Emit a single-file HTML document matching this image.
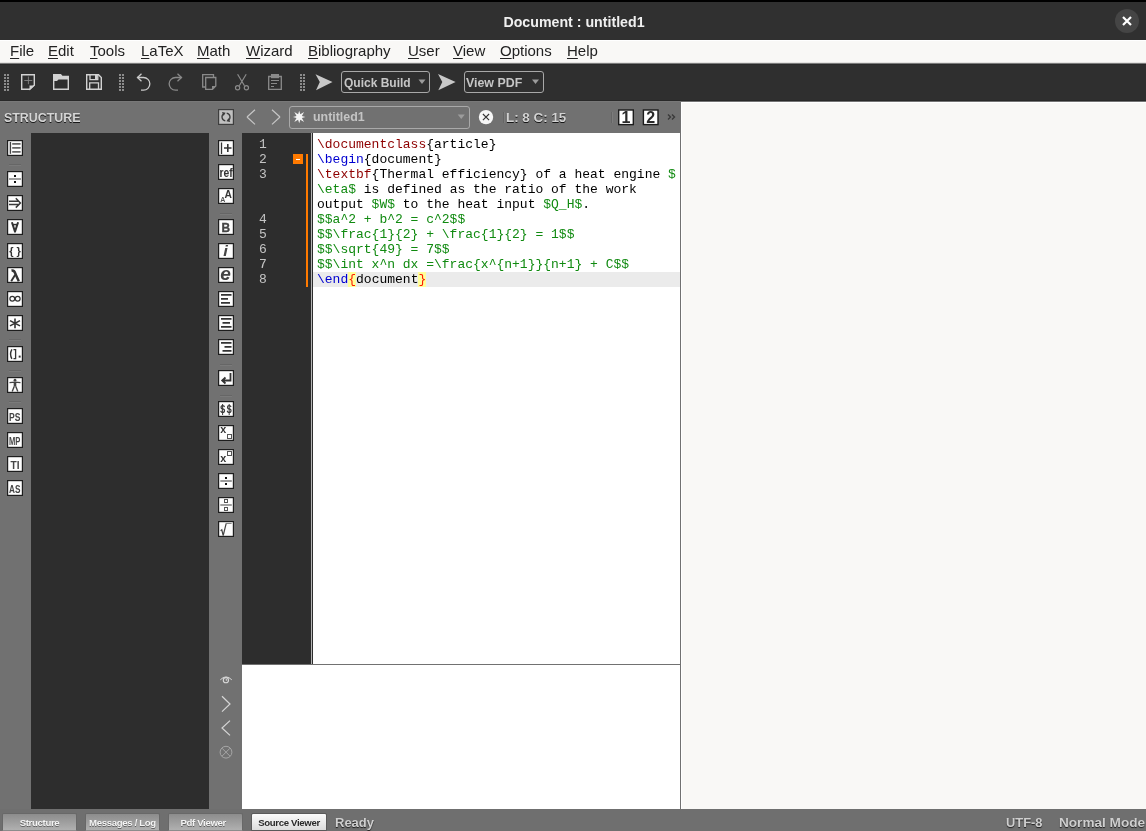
<!DOCTYPE html><html><head><meta charset="utf-8"><style>
*{margin:0;padding:0;box-sizing:border-box}
html,body{width:1146px;height:831px;overflow:hidden;background:#f9f8f6;font-family:"Liberation Sans",sans-serif}
.a{will-change:transform}
.a{position:absolute}
.mi{top:42px;font-size:15px;line-height:17px;color:#222}
.mi u{text-decoration:underline;text-underline-offset:1.5px;text-decoration-thickness:1px}
.hd{font-weight:bold;color:#d6d6d6;text-shadow:0 1px 0 #181818;white-space:nowrap}
.code{font-family:"Liberation Mono",monospace;font-size:13px;line-height:15px;white-space:pre;color:#000;left:317px}
.ln{font-family:"Liberation Mono",monospace;font-size:13px;line-height:15px;color:#c4c4c4;left:259px}
.r{color:#8e0000}.b{color:#0000d0}.g{color:#108a10}
.hl{background:#ffff99;color:#ff1a00}
.btn{top:813px;height:18px;border:1px solid #686868;border-bottom:1px solid #8c8c8c;border-radius:2px 2px 0 0;background:linear-gradient(#8c8c8c,#b0b0b0);color:#f4f4f4;font-weight:bold;font-size:9.6px;letter-spacing:-0.33px;line-height:17px;text-align:center;text-shadow:0 1px 0 #606060;white-space:nowrap}
svg{position:absolute;left:0;top:0}
</style></head><body>
<div class="a" style="left:0px;top:0px;width:1146px;height:2px;background:#000;"></div>
<div class="a" style="left:0px;top:2px;width:1146px;height:38px;background:#303030;"></div>
<div class="a" style="left:0;top:14px;width:1148px;text-align:center;color:#f0f0f0;font-weight:bold;font-size:14.2px;line-height:16px">Document : untitled1</div>
<div class="a" style="left:1115px;top:9px;width:24px;height:24px;background:#454545;border-radius:12px"></div>
<div class="a" style="left:0px;top:40px;width:1146px;height:23px;background:#f9f8f6;border-top:1px solid #ffffff"></div>
<div class="a mi" style="left:10px"><u>F</u>ile</div>
<div class="a mi" style="left:48px"><u>E</u>dit</div>
<div class="a mi" style="left:90px"><u>T</u>ools</div>
<div class="a mi" style="left:141px"><u>L</u>aTeX</div>
<div class="a mi" style="left:197px"><u>M</u>ath</div>
<div class="a mi" style="left:246px"><u>W</u>izard</div>
<div class="a mi" style="left:308px"><u>B</u>ibliography</div>
<div class="a mi" style="left:408px"><u>U</u>ser</div>
<div class="a mi" style="left:453px"><u>V</u>iew</div>
<div class="a mi" style="left:500px"><u>O</u>ptions</div>
<div class="a mi" style="left:567px"><u>H</u>elp</div>
<div class="a" style="left:0px;top:63px;width:1146px;height:38px;background:#2f2f2f;"></div>
<div class="a" style="left:0px;top:62px;width:1146px;height:1px;background:#e4e3e1;"></div>
<div class="a" style="left:0px;top:63px;width:1146px;height:1px;background:#7a7a7a;"></div>
<div class="a" style="left:0px;top:64px;width:1146px;height:1px;background:#2a2a2a;"></div>
<div class="a" style="left:341px;top:71px;width:89px;height:22px;background:transparent;border:1px solid #a8a8a8;border-radius:3px"></div>
<div class="a" style="left:464px;top:71px;width:80px;height:22px;background:transparent;border:1px solid #a8a8a8;border-radius:3px"></div>
<div class="a" style="left:343.5px;top:76px;font-weight:bold;font-size:12px;line-height:14px;color:#c6c6c6">Quick Build</div>
<div class="a" style="left:466.3px;top:76px;font-weight:bold;font-size:12.4px;line-height:14px;color:#c6c6c6">View PDF</div>
<div class="a" style="left:0px;top:101px;width:681px;height:708px;background:#717171;"></div>
<div class="a" style="left:0px;top:100px;width:1146px;height:1px;background:#282828;"></div>
<div class="a" style="left:0px;top:101px;width:681px;height:1px;background:#787878;"></div>
<div class="a" style="left:681px;top:101px;width:465px;height:1px;background:#747474;"></div>
<div class="a" style="left:681px;top:102px;width:465px;height:1px;background:#ffffff;"></div>
<div class="a" style="left:681px;top:102px;width:1px;height:707px;background:#ffffff;"></div>
<div class="a" style="left:31px;top:133px;width:178px;height:676px;background:#2d2d2d;"></div>
<div class="a hd" style="left:4px;top:111px;font-size:12.4px;line-height:14px">STRUCTURE</div>
<div class="a" style="left:289px;top:106px;width:181px;height:23px;background:transparent;border:1px solid #a9a9a9;border-radius:3px"></div>
<div class="a hd" style="left:313px;top:110px;font-size:12.4px;line-height:14px;color:#c4c4c4;text-shadow:none">untitled1</div>
<div class="a hd" style="left:505.5px;top:111px;font-size:13.4px;line-height:14px;color:#d2d2d2;text-shadow:0 1px 0 #151515">L: 8 C: 15</div>
<div class="a" style="left:503px;top:112px;width:1px;height:11px;background:#656565;"></div>
<div class="a" style="left:504px;top:112px;width:1px;height:11px;background:#7c7c7c;"></div>
<div class="a" style="left:611px;top:112px;width:1px;height:11px;background:#656565;"></div>
<div class="a" style="left:612px;top:112px;width:1px;height:11px;background:#7c7c7c;"></div>
<div class="a" style="left:242px;top:133px;width:69px;height:531px;background:#2d2d2d;"></div>
<div class="a" style="left:311px;top:133px;width:1px;height:531px;background:#b4b4b4;"></div>
<div class="a" style="left:312px;top:133px;width:1px;height:531px;background:#2d2d2d;"></div>
<div class="a" style="left:313px;top:133px;width:367px;height:531px;background:#ffffff;"></div>
<div class="a" style="left:313px;top:272px;width:367px;height:15px;background:#ebebeb;"></div>
<div class="a" style="left:293px;top:154px;width:10px;height:10px;background:#ff7a00;"></div>
<div class="a" style="left:296px;top:159px;width:4px;height:1px;background:#ffffff;"></div>
<div class="a" style="left:306px;top:154px;width:2px;height:133px;background:#ff7a00;"></div>
<div class="a ln" style="top:137px">1</div>
<div class="a ln" style="top:152px">2</div>
<div class="a ln" style="top:167px">3</div>
<div class="a ln" style="top:212px">4</div>
<div class="a ln" style="top:227px">5</div>
<div class="a ln" style="top:242px">6</div>
<div class="a ln" style="top:257px">7</div>
<div class="a ln" style="top:272px">8</div>
<div class="a code" style="top:137px"><span class="r">\documentclass</span>{article}</div>
<div class="a code" style="top:152px"><span class="b">\begin</span>{document}</div>
<div class="a code" style="top:167px"><span class="r">\textbf</span>{Thermal efficiency} of a heat engine <span class="g">$</span></div>
<div class="a code" style="top:182px"><span class="g">\eta$</span> is defined as the ratio of the work</div>
<div class="a code" style="top:197px">output <span class="g">$W$</span> to the heat input <span class="g">$Q_H$</span>.</div>
<div class="a code" style="top:212px"><span class="g">$$a^2 + b^2 = c^2$$</span></div>
<div class="a code" style="top:227px"><span class="g">$$\frac{1}{2} + \frac{1}{2} = 1$$</span></div>
<div class="a code" style="top:242px"><span class="g">$$\sqrt{49} = 7$$</span></div>
<div class="a code" style="top:257px"><span class="g">$$\int x^n dx =\frac{x^{n+1}}{n+1} + C$$</span></div>
<div class="a code" style="top:272px"><span class="b">\end</span><span class="hl">{</span>document<span class="hl">}</span></div>
<div class="a" style="left:242px;top:664px;width:438px;height:1px;background:#717171;"></div>
<div class="a" style="left:242px;top:665px;width:438px;height:144px;background:#ffffff;"></div>
<div class="a" style="left:0px;top:809px;width:1146px;height:22px;background:#6f6f6f;"></div>
<div class="a btn" style="left:2px;width:75px">Structure</div>
<div class="a btn" style="left:85px;width:75px">Messages / Log</div>
<div class="a btn" style="left:168px;width:75px">Pdf Viewer&nbsp;&nbsp;</div>
<div class="a btn" style="left:251px;width:76px;background:linear-gradient(#fbfbfb,#dcdcdc);color:#2a2a2a;text-shadow:none;border-color:#5a5a5a">Source Viewer</div>
<div class="a hd" style="left:335px;top:815px;font-size:13px;line-height:15px;color:#cfcfcf;text-shadow:0 1px 1px #1a1a1a">Ready</div>
<div class="a hd" style="left:1005.5px;top:814.5px;font-size:12.9px;line-height:15px;color:#cfcfcf;text-shadow:0 1px 1px #1e1e1e">UTF-8</div>
<div class="a hd" style="left:1058.5px;top:814.5px;font-size:13.6px;line-height:15px;color:#cfcfcf;text-shadow:0 1px 1px #1e1e1e">Normal Mode</div>
<svg width="1146" height="831" viewBox="0 0 1146 831"><path d="M1123 17L1131 25M1131 17L1123 25" stroke="#fff" stroke-width="2.2"/><rect x="4" y="74" width="2" height="2" fill="#8c8c8c"/><rect x="7" y="74" width="2" height="2" fill="#8c8c8c"/><rect x="4" y="77" width="2" height="2" fill="#8c8c8c"/><rect x="7" y="77" width="2" height="2" fill="#8c8c8c"/><rect x="4" y="80" width="2" height="2" fill="#8c8c8c"/><rect x="7" y="80" width="2" height="2" fill="#8c8c8c"/><rect x="4" y="83" width="2" height="2" fill="#8c8c8c"/><rect x="7" y="83" width="2" height="2" fill="#8c8c8c"/><rect x="4" y="86" width="2" height="2" fill="#8c8c8c"/><rect x="7" y="86" width="2" height="2" fill="#8c8c8c"/><rect x="4" y="89" width="2" height="2" fill="#8c8c8c"/><rect x="7" y="89" width="2" height="2" fill="#8c8c8c"/><rect x="119" y="74" width="2" height="2" fill="#8c8c8c"/><rect x="122" y="74" width="2" height="2" fill="#8c8c8c"/><rect x="119" y="77" width="2" height="2" fill="#8c8c8c"/><rect x="122" y="77" width="2" height="2" fill="#8c8c8c"/><rect x="119" y="80" width="2" height="2" fill="#8c8c8c"/><rect x="122" y="80" width="2" height="2" fill="#8c8c8c"/><rect x="119" y="83" width="2" height="2" fill="#8c8c8c"/><rect x="122" y="83" width="2" height="2" fill="#8c8c8c"/><rect x="119" y="86" width="2" height="2" fill="#8c8c8c"/><rect x="122" y="86" width="2" height="2" fill="#8c8c8c"/><rect x="119" y="89" width="2" height="2" fill="#8c8c8c"/><rect x="122" y="89" width="2" height="2" fill="#8c8c8c"/><rect x="300" y="74" width="2" height="2" fill="#8c8c8c"/><rect x="303" y="74" width="2" height="2" fill="#8c8c8c"/><rect x="300" y="77" width="2" height="2" fill="#8c8c8c"/><rect x="303" y="77" width="2" height="2" fill="#8c8c8c"/><rect x="300" y="80" width="2" height="2" fill="#8c8c8c"/><rect x="303" y="80" width="2" height="2" fill="#8c8c8c"/><rect x="300" y="83" width="2" height="2" fill="#8c8c8c"/><rect x="303" y="83" width="2" height="2" fill="#8c8c8c"/><rect x="300" y="86" width="2" height="2" fill="#8c8c8c"/><rect x="303" y="86" width="2" height="2" fill="#8c8c8c"/><rect x="300" y="89" width="2" height="2" fill="#8c8c8c"/><rect x="303" y="89" width="2" height="2" fill="#8c8c8c"/><path d="M21.7 74.7H34.3V85.3L29.6 89.3H21.7Z" fill="none" stroke="#d2d2d2" stroke-width="1.4"/><path d="M29.5 85.5H34.5L29.5 90.5Z" fill="#d2d2d2"/><path d="M24.3 80.5H32.3M28.4 76.5V84.2" stroke="#858585" stroke-width="0.9"/><path d="M53.7 89.3V74.7H60.5L62 76.5H68.3V89.3Z" fill="none" stroke="#d2d2d2" stroke-width="1.4"/><path d="M53 74H60.7L62.3 76H69V79.5H58.5L57 81H53Z" fill="#d2d2d2"/><path d="M86.7 74.7H98.5L101.3 77.5V89.3H86.7Z" fill="none" stroke="#d2d2d2" stroke-width="1.4"/><path d="M90 74V79.7H97.8V74" fill="none" stroke="#d2d2d2" stroke-width="1.3"/><rect x="95" y="75" width="2.5" height="4" fill="#d2d2d2"/><path d="M89.7 90V82.8H98.5V90" fill="none" stroke="#d2d2d2" stroke-width="1.3"/><path d="M137.5 77.5H143.5A6.3 6.3 0 0 1 143.5 90.2H141" fill="none" stroke="#cacaca" stroke-width="1.3"/><path d="M141.5 73.8L137.5 77.5L141.5 81.2" fill="none" stroke="#cacaca" stroke-width="1.3"/><path d="M181.5 77.5H175.5A6.3 6.3 0 0 0 175.5 90.2H178" fill="none" stroke="#8a8a8a" stroke-width="1.3"/><path d="M177.5 73.8L181.5 77.5L177.5 81.2" fill="none" stroke="#8a8a8a" stroke-width="1.3"/><path d="M205.5 87H202.7V74.7H213.5V77.2" fill="none" stroke="#8a8a8a" stroke-width="1.3"/><path d="M205.7 77.5H215.8V86L212.5 89.3H205.7Z" fill="none" stroke="#8a8a8a" stroke-width="1.3"/><path d="M212 86H216L212 90Z" fill="#8a8a8a"/><path d="M237.6 74.3L244.5 85.8M246.2 74.3L239.3 85.8" fill="none" stroke="#8a8a8a" stroke-width="1.2"/><circle cx="237.6" cy="87.8" r="2.1" fill="none" stroke="#8a8a8a" stroke-width="1.2"/><circle cx="246.4" cy="87.8" r="2.1" fill="none" stroke="#8a8a8a" stroke-width="1.2"/><path d="M268.7 76.5H281.3V89.4H268.7Z" fill="none" stroke="#8a8a8a" stroke-width="1.3"/><rect x="271" y="74" width="8" height="4.2" fill="#8a8a8a"/><path d="M271 80.5H279M271 83.5H277M271 86.5H274" stroke="#8a8a8a" stroke-width="1"/><path d="M315.5 74.3L332.5 82L316 90.2L319.8 82Z" fill="#c8c8c8"/><path d="M438 74L455.6 82L438.3 90.2L442.3 82Z" fill="#c8c8c8"/><path d="M418.5 79.5H425.5L422 84Z" fill="#9c9c9c"/><path d="M532 79.5H539L535.5 84Z" fill="#9c9c9c"/><rect x="218.6" y="109.6" width="14.8" height="14.8" fill="#c0c0c0" stroke="#3e3e3e" stroke-width="1.2"/><path d="M224 113.5A4 4 0 0 0 225.3 120.9M226.7 113.1A4 4 0 0 1 228 120.5" fill="none" stroke="#3a3a3a" stroke-width="1.3"/><path d="M222 112L225.6 112.8L223.6 116Z M230.2 122L226.5 121.2L228.6 118Z" fill="#3a3a3a"/><path d="M247 117L255 109.8M247 117L255 124.4" fill="none" stroke="#c6c6c6" stroke-width="1.2"/><path d="M280 117L272 109.8M280 117L272 124.4" fill="none" stroke="#c6c6c6" stroke-width="1.2"/><polygon points="299.20,110.80 300.31,114.32 304.08,112.12 301.88,115.89 305.40,117.00 301.88,118.11 304.08,121.88 300.31,119.68 299.20,123.20 298.09,119.68 294.32,121.88 296.52,118.11 293.00,117.00 296.52,115.89 294.32,112.12 298.09,114.32" fill="#f4f4f4"/><path d="M457.7 114.6H464.8L461.25 118.9Z" fill="#9c9c9c"/><circle cx="486" cy="117.1" r="7.2" fill="#f6f6f6"/><path d="M482.9 114L489.1 120.2M489.1 114L482.9 120.2" stroke="#333" stroke-width="1.1"/><rect x="618.7" y="110" width="14.6" height="14.6" fill="#fff" stroke="#1c1c1c" stroke-width="1.4"/><rect x="643.4" y="110" width="14.6" height="14.6" fill="#fff" stroke="#1c1c1c" stroke-width="1.4"/><text x="626" y="123" font-family="Liberation Sans" font-weight="bold" font-size="16" text-anchor="middle" fill="#2a2a2a">1</text><text x="650.7" y="123" font-family="Liberation Sans" font-weight="bold" font-size="16" text-anchor="middle" fill="#2a2a2a">2</text><path d="M668 114.5L670.5 117L668 119.5M672 114.5L674.5 117L672 119.5" fill="none" stroke="#3a3a3a" stroke-width="1.4"/><rect x="7.6" y="140.6" width="14.8" height="14.8" fill="#fdfdfd" stroke="#1e1e1e" stroke-width="1.2"/><rect x="7.6" y="171.6" width="14.8" height="14.8" fill="#fdfdfd" stroke="#1e1e1e" stroke-width="1.2"/><rect x="7.6" y="195.6" width="14.8" height="14.8" fill="#fdfdfd" stroke="#1e1e1e" stroke-width="1.2"/><rect x="7.6" y="219.6" width="14.8" height="14.8" fill="#fdfdfd" stroke="#1e1e1e" stroke-width="1.2"/><rect x="7.6" y="243.6" width="14.8" height="14.8" fill="#fdfdfd" stroke="#1e1e1e" stroke-width="1.2"/><rect x="7.6" y="267.6" width="14.8" height="14.8" fill="#fdfdfd" stroke="#1e1e1e" stroke-width="1.2"/><rect x="7.6" y="291.6" width="14.8" height="14.8" fill="#fdfdfd" stroke="#1e1e1e" stroke-width="1.2"/><rect x="7.6" y="315.6" width="14.8" height="14.8" fill="#fdfdfd" stroke="#1e1e1e" stroke-width="1.2"/><rect x="7.6" y="346.6" width="14.8" height="14.8" fill="#fdfdfd" stroke="#1e1e1e" stroke-width="1.2"/><rect x="7.6" y="377.6" width="14.8" height="14.8" fill="#fdfdfd" stroke="#1e1e1e" stroke-width="1.2"/><rect x="7.6" y="408.6" width="14.8" height="14.8" fill="#fdfdfd" stroke="#1e1e1e" stroke-width="1.2"/><rect x="7.6" y="432.6" width="14.8" height="14.8" fill="#fdfdfd" stroke="#1e1e1e" stroke-width="1.2"/><rect x="7.6" y="456.6" width="14.8" height="14.8" fill="#fdfdfd" stroke="#1e1e1e" stroke-width="1.2"/><rect x="7.6" y="480.6" width="14.8" height="14.8" fill="#fdfdfd" stroke="#1e1e1e" stroke-width="1.2"/><rect x="9" y="164" width="12" height="1" fill="#666"/><rect x="9" y="165" width="12" height="1" fill="#7a7a7a"/><rect x="9" y="339" width="12" height="1" fill="#666"/><rect x="9" y="340" width="12" height="1" fill="#7a7a7a"/><rect x="9" y="370" width="12" height="1" fill="#666"/><rect x="9" y="371" width="12" height="1" fill="#7a7a7a"/><rect x="9" y="401" width="12" height="1" fill="#666"/><rect x="9" y="402" width="12" height="1" fill="#7a7a7a"/><path d="M10.4 142V153.8" stroke="#444" stroke-width="1.4"/><path d="M12.2 143.9H20.6M12.2 147.9H20.6M12.2 151.9H20.6" stroke="#666" stroke-width="1.7"/><rect x="14" y="175" width="2" height="2" fill="#111"/><rect x="14" y="181" width="2" height="2" fill="#111"/><path d="M9 179H21" stroke="#888" stroke-width="1.6"/><path d="M9 201.3H18.5M9 204.6H18.5M15.8 198.3L20.4 202.95L15.8 207.6" fill="none" stroke="#3a3a3a" stroke-width="1.5"/><path d="M11.9 222.3L15 231.6L18.1 222.3" fill="none" stroke="#333" stroke-width="2" stroke-linejoin="round"/><path d="M12.4 224.6H17.6" stroke="#333" stroke-width="1.5"/><text x="9.2" y="255.3" font-family="Liberation Sans" font-size="11" font-weight="bold" fill="#333">{</text><text x="16.4" y="255.3" font-family="Liberation Sans" font-size="11" font-weight="bold" fill="#333">}</text><path d="M11.5 270.5Q14.5 270 15.5 274L18.8 281.2" fill="none" stroke="#333" stroke-width="2.4"/><path d="M15.2 274.8L11.2 281.2" fill="none" stroke="#333" stroke-width="1.9"/><circle cx="12.3" cy="298.8" r="2.4" fill="none" stroke="#333" stroke-width="1.2"/><circle cx="17.7" cy="298.8" r="2.4" fill="none" stroke="#333" stroke-width="1.2"/><path d="M15 318.4V328.2M10 320.6L20 325.9M20 320.6L10 325.9" stroke="#333" stroke-width="1.6"/><path d="M11.9 349.3Q9.2 354.1 11.9 358.9" fill="none" stroke="#333" stroke-width="1.4"/><path d="M13.5 349.6H15.6V358.6H13.5" fill="none" stroke="#333" stroke-width="1.3"/><rect x="18.7" y="355.6" width="1.9" height="2" fill="#333"/><circle cx="15" cy="380.2" r="1.4" fill="#444"/><path d="M9.5 382.6L15 382.2L20.5 382.6" fill="none" stroke="#444" stroke-width="1.3"/><path d="M15 382.5V386.6" stroke="#444" stroke-width="2.6"/><path d="M14.2 386.5L12.2 391.5M15.8 386.5L17.8 391.5" stroke="#444" stroke-width="1.4"/><text x="9" y="420.5" font-family="Liberation Sans" font-weight="bold" font-style="normal" font-size="11.8" fill="#444" textLength="11.4" lengthAdjust="spacingAndGlyphs">PS</text><text x="9" y="444.5" font-family="Liberation Sans" font-weight="bold" font-style="normal" font-size="11.8" fill="#444" textLength="11.4" lengthAdjust="spacingAndGlyphs">MP</text><text x="10.5" y="468.5" font-family="Liberation Sans" font-weight="bold" font-style="normal" font-size="11.8" fill="#444" textLength="9" lengthAdjust="spacingAndGlyphs">TI</text><text x="9" y="492.5" font-family="Liberation Sans" font-weight="bold" font-style="normal" font-size="11.8" fill="#444" textLength="11.4" lengthAdjust="spacingAndGlyphs">AS</text><rect x="218.6" y="140.6" width="14.8" height="14.8" fill="#fdfdfd" stroke="#1e1e1e" stroke-width="1.2"/><rect x="218.6" y="164.6" width="14.8" height="14.8" fill="#fdfdfd" stroke="#1e1e1e" stroke-width="1.2"/><rect x="218.6" y="188.6" width="14.8" height="14.8" fill="#fdfdfd" stroke="#1e1e1e" stroke-width="1.2"/><rect x="218.6" y="219.6" width="14.8" height="14.8" fill="#fdfdfd" stroke="#1e1e1e" stroke-width="1.2"/><rect x="218.6" y="243.6" width="14.8" height="14.8" fill="#fdfdfd" stroke="#1e1e1e" stroke-width="1.2"/><rect x="218.6" y="267.6" width="14.8" height="14.8" fill="#fdfdfd" stroke="#1e1e1e" stroke-width="1.2"/><rect x="218.6" y="291.6" width="14.8" height="14.8" fill="#fdfdfd" stroke="#1e1e1e" stroke-width="1.2"/><rect x="218.6" y="315.6" width="14.8" height="14.8" fill="#fdfdfd" stroke="#1e1e1e" stroke-width="1.2"/><rect x="218.6" y="339.6" width="14.8" height="14.8" fill="#fdfdfd" stroke="#1e1e1e" stroke-width="1.2"/><rect x="218.6" y="370.6" width="14.8" height="14.8" fill="#fdfdfd" stroke="#1e1e1e" stroke-width="1.2"/><rect x="218.6" y="401.6" width="14.8" height="14.8" fill="#fdfdfd" stroke="#1e1e1e" stroke-width="1.2"/><rect x="218.6" y="425.6" width="14.8" height="14.8" fill="#fdfdfd" stroke="#1e1e1e" stroke-width="1.2"/><rect x="218.6" y="449.6" width="14.8" height="14.8" fill="#fdfdfd" stroke="#1e1e1e" stroke-width="1.2"/><rect x="218.6" y="473.6" width="14.8" height="14.8" fill="#fdfdfd" stroke="#1e1e1e" stroke-width="1.2"/><rect x="218.6" y="497.6" width="14.8" height="14.8" fill="#fdfdfd" stroke="#1e1e1e" stroke-width="1.2"/><rect x="218.6" y="521.6" width="14.8" height="14.8" fill="#fdfdfd" stroke="#1e1e1e" stroke-width="1.2"/><rect x="220" y="213" width="12" height="1" fill="#666"/><rect x="220" y="214" width="12" height="1" fill="#7a7a7a"/><rect x="220" y="364" width="12" height="1" fill="#666"/><rect x="220" y="365" width="12" height="1" fill="#7a7a7a"/><rect x="220" y="395" width="12" height="1" fill="#666"/><rect x="220" y="396" width="12" height="1" fill="#7a7a7a"/><path d="M221.5 142.5V154" stroke="#333" stroke-width="1.3"/><path d="M224 148H231.5M227.8 144V152" stroke="#333" stroke-width="1.6"/><text x="219.6" y="176.6" font-family="Liberation Sans" font-weight="bold" font-style="normal" font-size="12.8" fill="#333" textLength="13.2" lengthAdjust="spacingAndGlyphs">ref</text><text x="220.2" y="202.2" font-family="Liberation Sans" font-size="7" font-weight="bold" fill="#555">A</text><text x="224.6" y="197.9" font-family="Liberation Sans" font-weight="bold" font-style="normal" font-size="11" fill="#333" textLength="7.4" lengthAdjust="spacingAndGlyphs">A</text><text x="221.6" y="231.9" font-family="Liberation Sans" font-weight="bold" font-size="12.6" fill="#444" stroke="#444" stroke-width="0.35" textLength="8.6" lengthAdjust="spacingAndGlyphs">B</text><text x="223.3" y="256.4" font-family="Liberation Sans" font-weight="bold" font-style="italic" font-size="14" fill="#444" textLength="4.6" lengthAdjust="spacingAndGlyphs">i</text><text x="220.3" y="280.2" font-family="Liberation Sans" font-weight="bold" font-style="italic" font-size="18.5" fill="#444" textLength="10.6" lengthAdjust="spacingAndGlyphs">e</text><path d="M221 294.8H231.5M221 298.8H228M221 302.8H230" stroke="#333" stroke-width="1.8"/><path d="M221 318.8H231.5M222.5 322.8H230M221 326.8H231.5" stroke="#333" stroke-width="1.8"/><path d="M221 342.8H231.5M224.5 346.8H231.5M222.5 350.8H231.5" stroke="#333" stroke-width="1.8"/><path d="M230.5 373V380.5H222.5M225.5 377.5L222.2 380.5L225.5 383.5" fill="none" stroke="#333" stroke-width="1.8"/><text x="219.9" y="413" font-family="Liberation Sans" font-weight="bold" font-style="normal" font-size="10" fill="#3a3a3a" textLength="5.4" lengthAdjust="spacingAndGlyphs">S</text><text x="226.5" y="413" font-family="Liberation Sans" font-weight="bold" font-style="normal" font-size="10" fill="#3a3a3a" textLength="5.4" lengthAdjust="spacingAndGlyphs">S</text><path d="M222.6 404V415M229.2 404V415" stroke="#3a3a3a" stroke-width="1"/><text x="220.2" y="433.2" font-family="Liberation Sans" font-weight="bold" font-style="normal" font-size="10.5" fill="#333" textLength="6" lengthAdjust="spacingAndGlyphs">x</text><rect x="227.5" y="434.5" width="4" height="4" fill="none" stroke="#555" stroke-width="1"/><text x="220.2" y="462.2" font-family="Liberation Sans" font-weight="bold" font-style="normal" font-size="10.5" fill="#333" textLength="6" lengthAdjust="spacingAndGlyphs">x</text><rect x="227.5" y="451.5" width="4" height="4" fill="none" stroke="#555" stroke-width="1"/><rect x="225" y="477" width="2" height="2" fill="#111"/><rect x="225" y="483" width="2" height="2" fill="#111"/><path d="M220.3 481H231.8" stroke="#888" stroke-width="1.7"/><rect x="224.5" y="499.5" width="3" height="3" fill="none" stroke="#555" stroke-width="1"/><rect x="224.5" y="507.5" width="3" height="3" fill="none" stroke="#555" stroke-width="1"/><path d="M220.3 505H231.8" stroke="#888" stroke-width="1.6"/><path d="M220.6 530.8L221.8 529.8L223.2 535.5L226.2 523.4" fill="none" stroke="#444" stroke-width="1.2"/><path d="M226 523.4H231.6" stroke="#777" stroke-width="1"/><path d="M220.3 679.8Q226 674 231.8 679.8" fill="none" stroke="#d8d8d8" stroke-width="1"/><circle cx="225.9" cy="680.2" r="2.6" fill="none" stroke="#d8d8d8" stroke-width="1.1"/><path d="M225.8 680.4V678.9A1.5 1.5 0 0 1 227.2 680.6Z" fill="#f2f2f2"/><path d="M222 696.2L230 704L222 711.6" fill="none" stroke="#d6d6d6" stroke-width="1.2"/><path d="M230 720.6L222 728L230 735.4" fill="none" stroke="#d6d6d6" stroke-width="1.2"/><circle cx="226" cy="752.2" r="5.9" fill="none" stroke="#a6a6a6" stroke-width="1"/><path d="M222 748.2L230 756.2M230 748.2L222 756.2" stroke="#a6a6a6" stroke-width="1"/></svg>
</body></html>
